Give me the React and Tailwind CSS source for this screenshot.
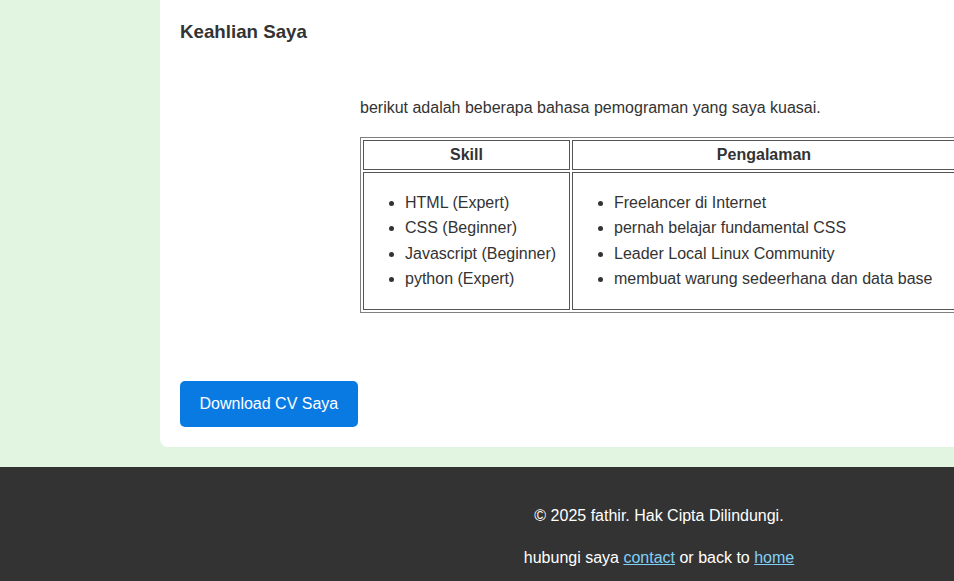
import React from 'react';

const skills = ['HTML (Expert)', 'CSS (Beginner)', 'Javascript (Beginner)', 'python (Expert)'];
const pengalaman = [
  'Freelancer di Internet',
  'pernah belajar fundamental CSS',
  'Leader Local Linux Community',
  'membuat warung sedeerhana dan data base',
];

export default function App() {
  return (
    <div className="w-[954px] h-[581px] overflow-hidden font-['Liberation_Sans',Arial,sans-serif] text-base leading-[1.6] text-[#333]">
      <div className="w-[1318px]">
        {/* Konten utama */}
        <div className="bg-[#e1f5e1] pl-[160px] pr-[160px] pb-5">
          <div className="bg-white rounded-b-lg px-5 pt-[17px] pb-5">
            <h3 className="text-[18.72px] font-bold leading-[30px]">Keahlian Saya</h3>

            <div className="ml-[180px] mt-[48px]">
              <p>berikut adalah beberapa bahasa pemograman yang saya kuasai.</p>
              <table className="mt-4 border border-[#808080] border-separate border-spacing-[2px]">
                <thead>
                  <tr>
                    <th className="w-[207px] border border-[#555] py-[5px] px-1 font-bold leading-[18px]">Skill</th>
                    <th className="w-[384px] border border-[#555] py-[5px] px-1 font-bold leading-[18px]">Pengalaman</th>
                  </tr>
                </thead>
                <tbody>
                  <tr>
                    <td className="border border-[#555] p-px align-middle">
                      <ul className="list-disc pl-10 my-4">
                        {skills.map((s) => (
                          <li key={s}>{s}</li>
                        ))}
                      </ul>
                    </td>
                    <td className="border border-[#555] p-px align-middle">
                      <ul className="list-disc pl-10 my-4">
                        {pengalaman.map((s) => (
                          <li key={s}>{s}</li>
                        ))}
                      </ul>
                    </td>
                  </tr>
                </tbody>
              </table>
            </div>

            <button className="mt-[68px] h-[46px] px-[19.5px] rounded-[5px] bg-[#0a7ae3] text-white text-base leading-[18px]">
              Download CV Saya
            </button>
          </div>
        </div>

        {/* Footer */}
        <footer className="bg-[#333] text-white text-center pt-5 pb-5">
          <p className="my-4">© 2025 fathir. Hak Cipta Dilindungi.</p>
          <p className="my-4">
            hubungi saya <a href="#" className="underline text-[#7fd0f7]">contact</a> or back to{' '}
            <a href="#" className="underline text-[#7fd0f7]">home</a>
          </p>
        </footer>
      </div>
    </div>
  );
}
